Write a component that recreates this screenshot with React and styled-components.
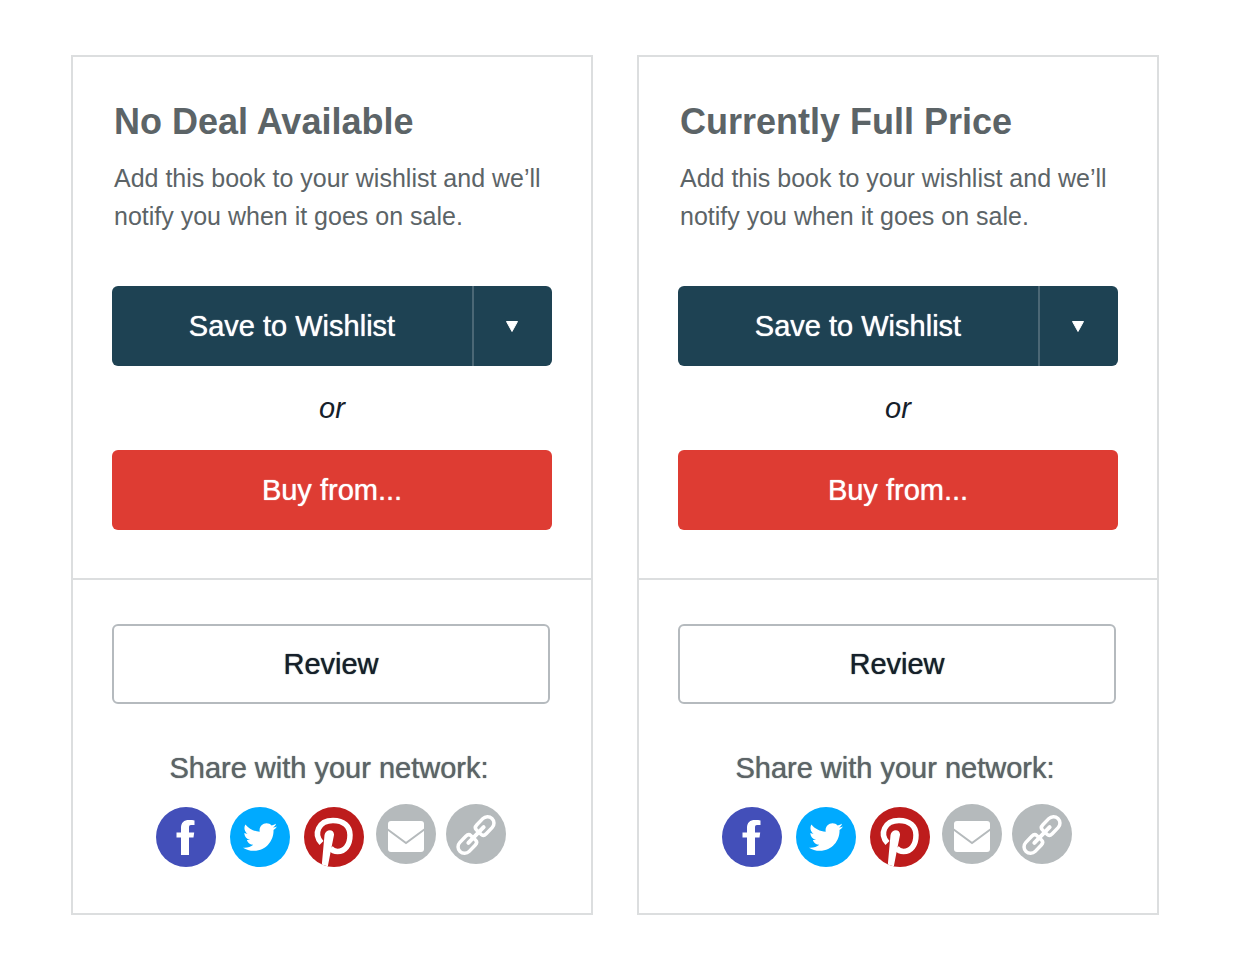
import React from "react";
import styled, { createGlobalStyle } from "styled-components";
import { FaTwitter } from "react-icons/fa";

const GlobalStyle = createGlobalStyle`
  *, *::before, *::after { box-sizing: border-box; }
  body {
    margin: 0;
    background: #fff;
    color: #5c6467;
    font-family: "Liberation Sans", Arial, Helvetica, sans-serif;
  }
`;

const Page = styled.main`
  display: grid;
  grid-template-columns: 1fr 1fr;
  gap: 44px;
  padding: 55px 83px 55px 71px;
`;

const Card = styled.article`
  border: 2px solid #dcdedf;
`;

const Offer = styled.section`
  display: flex;
  flex-direction: column;
  padding: 41px 39px 48px;
  border-bottom: 2px solid #dcdedf;
`;

const Title = styled.h2`
  margin: 0;
  padding: 0 2px;
  font-size: 36px;
  line-height: 48px;
  font-weight: 700;
`;

const Description = styled.p`
  margin: 13px 0 51px;
  padding: 0 0 0 2px;
  font-size: 25px;
  line-height: 38px;
`;

const Button = styled.button`
  height: 80px;
  padding: 0;
  border: ${(p) => (p.$outlined ? "2px solid #b5babe" : "0")};
  border-radius: 6px;
  background: ${(p) => p.$fill || "#fff"};
  color: ${(p) => (p.$outlined ? "#15202a" : "#fff")};
  font: inherit;
  font-size: 29px;
  text-shadow: 0 0 1px currentColor;
  cursor: pointer;
`;

const SplitButton = styled.div`
  display: flex;
`;

const SplitMain = styled(Button)`
  flex: 1;
  border-radius: 6px 0 0 6px;
`;

const SplitToggle = styled(Button)`
  display: flex;
  align-items: center;
  justify-content: center;
  width: 80px;
  border-left: 2px solid #4b6775;
  border-radius: 0 6px 6px 0;
`;

const Or = styled.p`
  margin: 0;
  color: #15202a;
  font-size: 29px;
  line-height: 84px;
  font-style: italic;
  text-align: center;
`;

const Actions = styled.section`
  display: flex;
  flex-direction: column;
  padding: 44px 41px 46px 39px;
`;

const ShareTitle = styled.h3`
  margin: 46px 0 18px;
  padding-right: 4px;
  font-size: 29px;
  line-height: 36px;
  font-weight: 400;
  text-align: center;
  text-shadow: 0 0 1px currentColor;
`;

const ShareList = styled.div`
  display: flex;
  justify-content: center;
  gap: 12px;
`;

const ShareGroup = styled.div`
  display: flex;
  align-items: ${(p) => p.$align};
  gap: ${(p) => p.$gap};
  height: 63px;
`;

const ShareLink = styled.a`
  display: flex;
  align-items: center;
  justify-content: center;
  width: 60px;
  height: 60px;
  border-radius: 50%;
  overflow: hidden;
  background: ${(p) => p.$fill};
  color: #fff;
`;

const Caret = () => (
  <svg width="16" height="14" viewBox="0 0 16 14" aria-hidden="true">
    <path d="M1.500 2.500h11L7 12.500z" fill="#fff" stroke="#fff" strokeLinejoin="round" />
  </svg>
);

const FacebookIcon = () => (
  <svg width="60" height="60" viewBox="0 0 60 60" aria-hidden="true">
    <path
      d="M25 48V30.500h-4.500v-5H25V21c0-5.500 3-8 8-8 2.500 0 4 .1 5.500.4V18H35c-1.500 0-2 .8-2 2.500v5h5.200l-.7 5H33V48z"
      fill="currentColor"
    />
  </svg>
);

const PinterestIcon = () => (
  <svg width="60" height="60" viewBox="0 0 60 60" aria-hidden="true">
    <path
      d="M17.500 36C9 27 14.500 13.500 29 13.500c11 0 17 6 17 14.500 0 10-5 16.500-12.500 16.500-3.500 0-5.500-1.500-7-3.500"
      fill="none"
      stroke="currentColor"
      strokeWidth="5.500"
    />
    <path d="M20.500 28c1-6.500 10-6.500 9.500 0l-3 15-3.500 18h-6z" fill="currentColor" />
  </svg>
);

const MailIcon = () => (
  <svg width="60" height="60" viewBox="0 0 60 60" aria-hidden="true">
    <rect x="12" y="17" width="36" height="31" rx="3" fill="currentColor" />
    <path d="M11 25l19 14 19-14" fill="none" stroke="#b5babc" strokeWidth="2" />
  </svg>
);

const LinkIcon = () => (
  <svg width="60" height="60" viewBox="0 0 60 60" aria-hidden="true">
    <g transform="rotate(-46 30 31)" fill="none" stroke="currentColor" strokeWidth="3.500" strokeLinecap="round">
      <path d="M26 29V27.500q0-3-4-3h-8.500a6.500 6.500 0 0 0 0 13H22q4 0 4-3V33" />
      <path d="M34 29V27.500q0-3 4-3h8.500a6.500 6.500 0 0 1 0 13H38q-4 0-4-3V33" />
      <path d="M19 31h22" strokeWidth="4" />
    </g>
  </svg>
);

const DealCard = ({ title }) => (
  <Card>
    <Offer>
      <Title>{title}</Title>
      <Description>Add this book to your wishlist and we’ll notify you when it goes on sale.</Description>
      <SplitButton>
        <SplitMain type="button" $fill="#1e4253">Save to Wishlist</SplitMain>
        <SplitToggle type="button" $fill="#1e4253" aria-label="Choose a wishlist">
          <Caret />
        </SplitToggle>
      </SplitButton>
      <Or>or</Or>
      <Button type="button" $fill="#de3c33">Buy from...</Button>
    </Offer>
    <Actions>
      <Button type="button" $outlined>Review</Button>
      <ShareTitle>Share with your network:</ShareTitle>
      <ShareList>
        <ShareGroup $align="flex-end" $gap="14px">
          <ShareLink href="#facebook" aria-label="Facebook" $fill="#434fb9"><FacebookIcon /></ShareLink>
          <ShareLink href="#twitter" aria-label="Twitter" $fill="#00aaff"><FaTwitter size={34} /></ShareLink>
          <ShareLink href="#pinterest" aria-label="Pinterest" $fill="#bd1c1c"><PinterestIcon /></ShareLink>
        </ShareGroup>
        <ShareGroup $align="flex-start" $gap="10px">
          <ShareLink href="#email" aria-label="Email" $fill="#b5babc"><MailIcon /></ShareLink>
          <ShareLink href="#link" aria-label="Copy link" $fill="#b5babc"><LinkIcon /></ShareLink>
        </ShareGroup>
      </ShareList>
    </Actions>
  </Card>
);

export default function App() {
  return (
    <>
      <GlobalStyle />
      <Page>
        <DealCard title="No Deal Available" />
        <DealCard title="Currently Full Price" />
      </Page>
    </>
  );
}
